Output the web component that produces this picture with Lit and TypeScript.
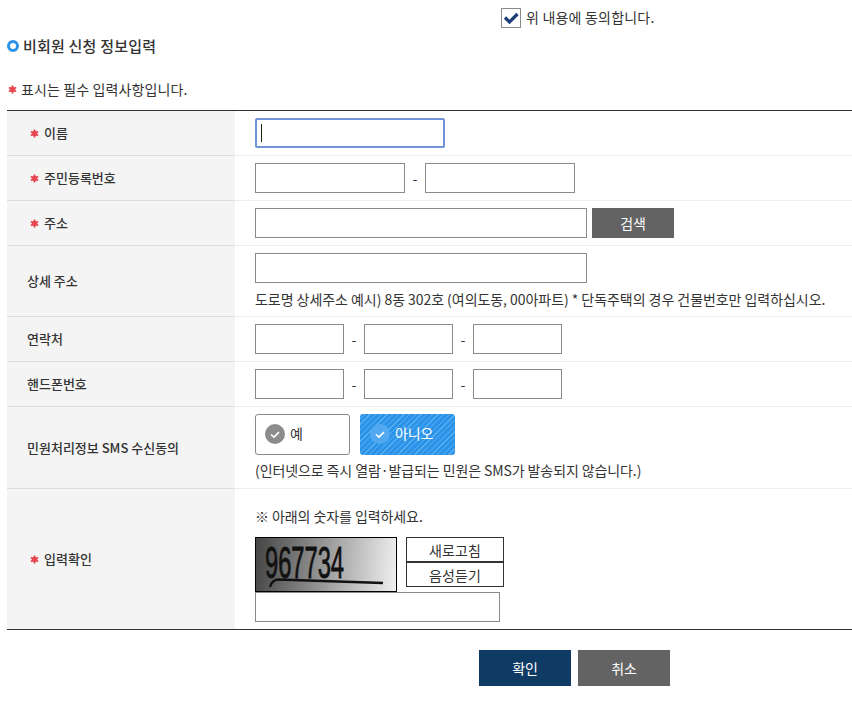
import { LitElement, html, css, svg } from "lit";
import { customElement } from "lit/decorators.js";

const star = html`<svg class="star" viewBox="0 0 10 10" width="9" height="9"><g stroke="#e8474f" stroke-width="2" stroke-linecap="butt"><path d="M5 0.5v9M1 2.8l8 4.4M9 2.8l-8 4.4"/></g><circle cx="5" cy="5" r="3" fill="#e8474f"/></svg>`;
const tick = (bg: string) => html`<svg class="tick" viewBox="0 0 20 20" width="20" height="20"><circle cx="10" cy="10" r="10" fill="${bg}"/><path d="M6 10.5l3 2.6 5-5" fill="none" stroke="#fff" stroke-width="1.6"/></svg>`;

@customElement("app-root")
export class AppRoot extends LitElement {
  static styles = css`
    :host { display: block; width: 852px; height: 713px; overflow: hidden; background: #fff; color: #333; font-family: "Noto Sans CJK KR", "Noto Sans", sans-serif; font-size: 14px; line-height: 18px; letter-spacing: -0.08px; }
    * { box-sizing: border-box; }
    .agree { display: flex; align-items: center; gap: 5px; height: 36px; padding-left: 501px; }
    .agree span { position: relative; top: -1px; letter-spacing: 0.2px; }
    .agree .box { width: 20px; height: 20px; border: 1px solid #8a8a8a; background: #fff; display: block; }
    .title { display: flex; align-items: center; gap: 4px; height: 20px; margin: 0 0 0 7px; font-size: 15px; font-weight: 500; letter-spacing: 0.2px; }
    .ring { width: 12px; height: 12px; border: 3px solid #2b93e8; border-radius: 50%; }
    .note { display: flex; align-items: center; gap: 4px; padding-left: 8px; height: 20px; margin-top: 23px; letter-spacing: 0.12px; }
    .table { margin: 11px 0 0 7px; border-top: 1px solid #333; border-bottom: 1px solid #333; }
    .row { display: grid; grid-template-columns: 228px 1fr; }
    .row > * { border-bottom: 1px solid #eeeeee; }
    .row > .label { border-bottom-color: #dcdcdc; }
    .row:last-child > * { border-bottom: 0; }
    .h45 { height: 45px; } .h71 { height: 71px; } .h82 { height: 82px; } .h140 { height: 140px; }
    .label { background: #f4f4f4; display: flex; align-items: center; gap: 5px; padding-left: 20px; font-size: 13px; font-weight: 500; letter-spacing: 0; }
    .label.req { padding-left: 23px; }
    .field { padding: 7px 0 0 20px; }
    .line { display: flex; align-items: flex-start; line-height: 30px; }
    input { display: block; height: 30px; border: 1px solid #8a8a8a; background: #fff; padding: 0 4px; margin: 0; font: inherit; outline: none; }
    .w89 { width: 89px; } .w150 { width: 150px; } .w332 { width: 332px; } .w245 { width: 245px; }
    .caret { position: relative; display: block; width: 190px; height: 30px; border: 2px solid #6f94d8; border-radius: 2px; }
    .caret::after { content: ""; position: absolute; left: 4px; top: 4px; width: 1px; height: 18px; background: #222; }
    .dash { width: 20px; text-align: center; }
    .btn { display: flex; align-items: center; justify-content: center; color: #fff; background: #636363; font-size: 14px; }
    .search { width: 82px; height: 30px; margin-left: 5px; }
    .help { margin-top: 6px; line-height: 20px; letter-spacing: -0.05px; }
    .radios + .help { margin-top: 5px; letter-spacing: -0.1px; }
    .radios { display: flex; gap: 10px; }
    .radio { width: 95px; height: 41px; border: 1px solid #8a8a8a; border-radius: 3px; display: flex; align-items: center; gap: 5px; padding: 0 0 2px 9px; background: #fff; }
    .radio span { position: relative; top: -1px; }
    .radio.on { border: 0; color: #fff; padding-left: 10px; background: repeating-linear-gradient(135deg, #2b93e8 0 3px, #5aaef0 3px 4px); }
    .cap-field { padding-top: 18px; }
    .cap-row { display: flex; gap: 9px; margin-top: 12px; }
    .cap { display: block; width: 142px; height: 55px; border: 1px solid #000; background: linear-gradient(95deg, #454545, #f0f0f0); }
    .cap text { font-family: "Liberation Sans", sans-serif; font-size: 44px; }
    .cap-btns { display: flex; flex-direction: column; }
    .cap-btn { width: 98px; height: 25px; border: 1px solid #333; display: flex; align-items: center; justify-content: center; letter-spacing: 0.1px; }
    .actions { display: flex; gap: 7px; margin: 20px 0 0 479px; }
    .act { width: 92px; height: 36px; }
    .ok { background: #0f3a63; }
  `;

  private row(cls: string, label: unknown, req: boolean, body: unknown) {
    return html`<div class="row ${cls}"><div class="label ${req ? "req" : ""}">${req ? star : ""}<span>${label}</span></div>${body}</div>`;
  }

  render() {
    return html`
      <div class="agree">
        <svg class="box" viewBox="0 0 18 18"><path d="M3 8.500l4.500 4.500 8-8" fill="none" stroke="#1c3f78" stroke-width="3.200"/></svg>
        <span>위 내용에 동의합니다.</span>
      </div>
      <div class="title"><span class="ring"></span><span>비회원 신청 정보입력</span></div>
      <div class="note">${star}<span>표시는 필수 입력사항입니다.</span></div>
      <div class="table">
        ${this.row("h45", "이름", true, html`<div class="field"><span class="caret"></span></div>`)}
        ${this.row("h45", "주민등록번호", true, html`<div class="field line"><input class="w150" /><span class="dash">-</span><input class="w150" /></div>`)}
        ${this.row("h45", "주소", true, html`<div class="field line"><input class="w332" /><div class="btn search">검색</div></div>`)}
        ${this.row("h71", "상세 주소", false, html`<div class="field"><input class="w332" /><div class="help">도로명 상세주소 예시) 8동 302호 (여의도동, 00아파트) * 단독주택의 경우 건물번호만 입력하십시오.</div></div>`)}
        ${this.row("h45", "연락처", false, html`<div class="field line"><input class="w89" /><span class="dash">-</span><input class="w89" /><span class="dash">-</span><input class="w89" /></div>`)}
        ${this.row("h45", "핸드폰번호", false, html`<div class="field line"><input class="w89" /><span class="dash">-</span><input class="w89" /><span class="dash">-</span><input class="w89" /></div>`)}
        ${this.row("h82", "민원처리정보 SMS 수신동의", false, html`<div class="field"><div class="radios"><div class="radio">${tick("#8c8c8c")}<span>예</span></div><div class="radio on">${tick("#52a9f2")}<span>아니오</span></div></div><div class="help">(인터넷으로 즉시 열람·발급되는 민원은 SMS가 발송되지 않습니다.)</div></div>`)}
        ${this.row("h140", "입력확인", true, html`<div class="field cap-field">
          <div>※ 아래의 숫자를 입력하세요.</div>
          <div class="cap-row">
            <svg class="cap" viewBox="0 0 140 53">${svg`<text transform="translate(9 40) scale(0.54 1)" fill="#111" stroke="#111" stroke-width="0.8">967734</text><path d="M14 49q2-7 8-7.500l105 3.500" fill="none" stroke="#111" stroke-width="2.400"/>`}</svg>
            <div class="cap-btns"><div class="cap-btn">새로고침</div><div class="cap-btn">음성듣기</div></div>
          </div>
          <input class="w245" />
        </div>`)}
      </div>
      <div class="actions"><div class="btn act ok">확인</div><div class="btn act">취소</div></div>
    `;
  }
}
